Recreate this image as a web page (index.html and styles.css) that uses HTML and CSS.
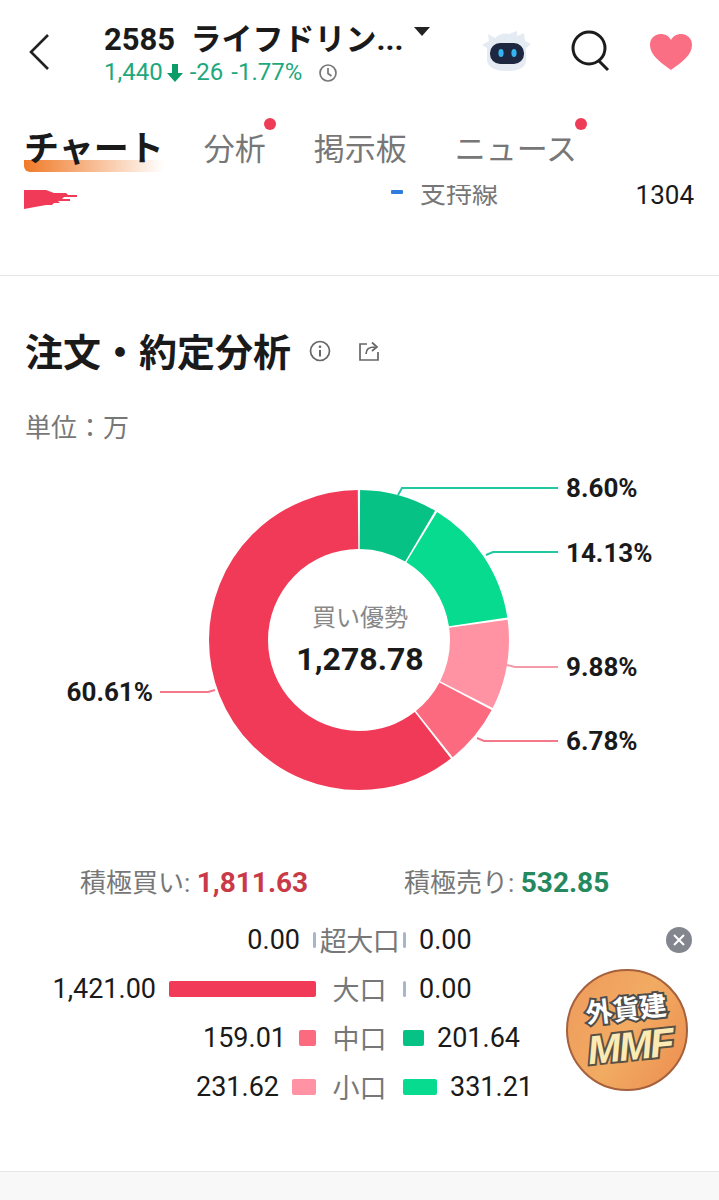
FILE: index.html
```html
<!DOCTYPE html>
<html lang="ja">
<head>
    <meta charset="UTF-8">
    <meta name="viewport" content="width=device-width, initial-scale=1.0">
    <title>注文・約定分析</title>
    <link rel="stylesheet" href="styles.css">
</head>
<body>
    <header class="top-bar">
        <svg class="back-icon" width="24" height="38" viewBox="0 0 24 38">
            <path d="M21 2 L4 19 L21 36" fill="none" stroke="#222" stroke-width="2.6"/>
        </svg>
        <div class="stock">
            <div class="stock-name">
                <span>2585&nbsp; ライフドリン...</span>
                <i class="caret"></i>
            </div>
            <div class="stock-price">
                <span>1,440</span>
                <svg width="16" height="20" viewBox="0 0 16 20">
                    <path d="M5 1 H11 V10 H16 L8 19 L0 10 H5 Z" fill="#0b9c68"/>
                </svg>
                <span class="change">-26</span>
                <span class="change">-1.77%</span>
                <svg class="clock" width="20" height="20" viewBox="0 0 20 20">
                    <circle cx="10" cy="10" r="8" fill="none" stroke="#777" stroke-width="1.7"/>
                    <path d="M10 5 V10.5 L13.5 13" fill="none" stroke="#777" stroke-width="1.7"/>
                </svg>
            </div>
        </div>
        <div class="top-actions">
            <svg width="52" height="46" viewBox="0 0 52 46">
                <path d="M8 14 L7 7 L14 11 Q20 5 28 7 L36 4 L36 9 L43 6 L44 14 L50 17 L45 21 L45 34 Q44 44 26 44 Q8 44 6 34 L6 21 L1 18 Z" fill="#e4ebf3"/>
                <rect x="9" y="16" width="34" height="21" rx="10" fill="#1d2740"/>
                <ellipse cx="20" cy="26" rx="2.6" ry="4" fill="#35b4ee"/>
                <ellipse cx="33" cy="26" rx="2.6" ry="4" fill="#35b4ee"/>
            </svg>
            <svg class="search-icon" width="40" height="42" viewBox="0 0 40 42">
                <circle cx="18" cy="18" r="16" fill="none" stroke="#1c1c1c" stroke-width="3"/>
                <path d="M28 31 L37 40" stroke="#1c1c1c" stroke-width="3"/>
            </svg>
            <svg class="heart-icon" width="42" height="36" viewBox="0 0 42 36">
                <path d="M21 36 C10 28 0 21 0 11 C0 4 5 0 11 0 C15 0 19 2 21 6 C23 2 27 0 31 0 C37 0 42 4 42 11 C42 21 32 28 21 36 Z" fill="#fb6f85"/>
            </svg>
        </div>
    </header>

    <nav class="tabs">
        <span class="tab active">チャート</span>
        <span class="tab dotted">分析</span>
        <span class="tab">掲示板</span>
        <span class="tab dotted">ニュース</span>
    </nav>

    <div class="chart-peek">
        <svg class="streak" width="54" height="22" viewBox="0 0 54 22">
            <path d="M0 1 H22 L30 4 H42 L44 6 H53 V8 H40 L38 10 H46 V12 H34 L36 14 H30 L28 16 H22 L0 20 Z" fill="#f13a57"/>
        </svg>
        <i class="line-key"></i>
        <span class="peek-label">支持線</span>
        <span class="peek-value">1304</span>
    </div>

    <section class="analysis">
        <div class="analysis-head">
            <h2>注文・約定分析</h2>
            <svg class="info-icon" width="22" height="22" viewBox="0 0 22 22">
                <circle cx="11" cy="11" r="9.5" fill="none" stroke="#666" stroke-width="1.7"/>
                <circle cx="11" cy="6.8" r="1.3" fill="#666"/>
                <path d="M11 10 V16.5" stroke="#666" stroke-width="2"/>
            </svg>
            <svg class="share-icon" width="22" height="22" viewBox="0 0 22 22">
                <path d="M9 4 H2 V20 H20 V12" fill="none" stroke="#666" stroke-width="1.7"/>
                <path d="M8 14 C8 9 11 7 17 7 M14 2.5 L19 7 L14 11" fill="none" stroke="#666" stroke-width="1.7"/>
            </svg>
        </div>
        <p class="unit">単位：万</p>

        <svg class="donut" width="719" height="340" viewBox="0 470 719 340">
            <g fill="none" stroke-width="59" transform="rotate(-90 359 645)">
                <circle cx="359" cy="645" r="120.5" pathLength="100" stroke="#07c285" stroke-dasharray="8.35 91.65" stroke-dashoffset="-0.12"/>
                <circle cx="359" cy="645" r="120.5" pathLength="100" stroke="#06db90" stroke-dasharray="13.88 86.12" stroke-dashoffset="-8.72"/>
                <circle cx="359" cy="645" r="120.5" pathLength="100" stroke="#ff92a3" stroke-dasharray="9.63 90.37" stroke-dashoffset="-22.85"/>
                <circle cx="359" cy="645" r="120.5" pathLength="100" stroke="#fc6a80" stroke-dasharray="6.53 93.47" stroke-dashoffset="-32.73"/>
                <circle cx="359" cy="645" r="120.5" pathLength="100" stroke="#f13a57" stroke-dasharray="60.36 39.64" stroke-dashoffset="-39.51"/>
            </g>
            <g fill="none" stroke-width="2">
                <path d="M398 500 L402 493 H558" stroke="#22c9a0"/>
                <path d="M486 560 L493 557 H558" stroke="#22c9a0"/>
                <path d="M507 670 L515 672 H558" stroke="#f59aa8"/>
                <path d="M477 743 L484 746 H558" stroke="#f4788a"/>
                <path d="M215 695 L208 697 H160" stroke="#f4788a"/>
            </g>
            <text class="pct" x="566" y="502">8.60%</text>
            <text class="pct" x="566" y="567">14.13%</text>
            <text class="pct" x="566" y="681">9.88%</text>
            <text class="pct" x="566" y="755">6.78%</text>
            <text class="pct" x="153" y="706" text-anchor="end">60.61%</text>
            <text class="donut-label" x="360" y="631" text-anchor="middle">買い優勢</text>
            <text class="donut-value" x="360" y="675" text-anchor="middle">1,278.78</text>
        </svg>

        <div class="totals">
            <div class="total buy">積極買い: <b>1,811.63</b></div>
            <div class="total sell">積極売り: <b>532.85</b></div>
        </div>

        <div class="orders">
            <div class="order-row">
                <div class="side left"><span>0.00</span><i class="bar empty"></i></div>
                <div class="size wide">超大口</div>
                <div class="side"><i class="bar empty"></i><span>0.00</span></div>
            </div>
            <div class="order-row">
                <div class="side left"><span>1,421.00</span><i class="bar red" style="width: 147px"></i></div>
                <div class="size">大口</div>
                <div class="side"><i class="bar empty"></i><span>0.00</span></div>
            </div>
            <div class="order-row">
                <div class="side left"><span>159.01</span><i class="bar mid-pink" style="width: 17px"></i></div>
                <div class="size">中口</div>
                <div class="side"><i class="bar dark-green" style="width: 21px"></i><span>201.64</span></div>
            </div>
            <div class="order-row">
                <div class="side left"><span>231.62</span><i class="bar pink" style="width: 24px"></i></div>
                <div class="size">小口</div>
                <div class="side"><i class="bar green" style="width: 34px"></i><span>331.21</span></div>
            </div>
        </div>
    </section>

    <div class="next-section"></div>

    <div class="promo">
        <div class="promo-text">
            <span class="promo-top">外貨建</span>
            <span class="promo-main">MMF</span>
        </div>
    </div>
    <div class="promo-close">
        <svg width="14" height="14" viewBox="0 0 14 14">
            <path d="M2 2 L12 12 M12 2 L2 12" stroke="#fff" stroke-width="2"/>
        </svg>
    </div>
</body>
</html>
```

FILE: styles.css
```css
:root {
    --sans: Roboto, "Noto Sans CJK JP", sans-serif;
    --text: #1a1a1a;
    --muted: #777777;
    --down: #1ea87c;
}

* {
    box-sizing: border-box;
}

body {
    margin: 0;
    height: 1200px;
    overflow: hidden;
    position: relative;
    background: #fff;
    color: var(--text);
    font-family: var(--sans);
}

.top-bar {
    height: 108px;
    display: flex;
    padding: 16px 27px 0 27px;
}

.back-icon {
    margin-top: 17px;
}

.stock {
    margin-left: 53px;
}

.stock-name {
    display: flex;
    align-items: center;
    height: 40px;
    font-size: 31px;
    font-weight: 700;
    white-space: nowrap;
}

.caret {
    width: 0;
    height: 0;
    margin: -10px 0 0 10px;
    border-left: 8px solid transparent;
    border-right: 8px solid transparent;
    border-top: 9px solid #222;
}

.stock-price {
    display: flex;
    align-items: center;
    height: 32px;
    font-size: 24px;
    color: var(--down);
    white-space: nowrap;
}

.stock-price svg {
    margin: 2px 7px 0 4px;
}

.change {
    margin-right: 8px;
}

.stock-price .clock {
    margin: 2px 0 0 8px;
}

.top-actions {
    display: flex;
    align-items: flex-start;
    margin-left: auto;
}

.top-actions svg {
    margin-top: 11px;
}

.top-actions .search-icon {
    margin: 14px 0 0 38px;
}

.top-actions .heart-icon {
    margin: 18px 0 0 39px;
}

.tabs {
    height: 77px;
    display: flex;
    align-items: flex-start;
    padding-left: 25px;
    font-size: 31px;
    color: var(--muted);
}

.tab {
    position: relative;
    height: 64px;
    line-height: 84px;
    margin-right: 48px;
    white-space: nowrap;
}

.tab:nth-child(1) {
    margin-right: 40px;
}

.tab.active {
    font-size: 35px;
    font-weight: 700;
    color: var(--text);
    background: linear-gradient(90deg, #f07a28, rgba(240, 122, 40, 0)) left bottom / 100% 12px no-repeat;
    border-radius: 6px;
    margin-left: -1px;
}

.tab.dotted::after {
    content: "";
    position: absolute;
    right: -10px;
    top: 10px;
    width: 12px;
    height: 12px;
    border-radius: 50%;
    background: #ee3c56;
}

.chart-peek {
    height: 91px;
    display: flex;
    align-items: flex-start;
    overflow: hidden;
    padding: 0 25px;
    border-bottom: 1px solid #e6e6e6;
}

.streak {
    margin-left: -1px;
    margin-top: 4px;
}

.line-key {
    width: 12px;
    height: 4px;
    margin: 5px 0 0 313px;
    border-radius: 1px;
    background: #2f7be0;
}

.peek-label {
    margin: -8px 0 0 17px;
    font-size: 26px;
    line-height: 34px;
    color: #777;
}

.peek-value {
    margin: -7px 0 0 auto;
    font-size: 26px;
    line-height: 34px;
}

.analysis-head {
    display: flex;
    align-items: center;
    height: 44px;
    margin-top: 55px;
    padding-left: 25px;
}

h2 {
    margin: 0;
    font-size: 38px;
    line-height: 44px;
    font-weight: 700;
    white-space: nowrap;
}

.info-icon {
    margin: -4px 0 0 18px;
}

.share-icon {
    margin: -4px 0 0 27px;
}

.unit {
    margin: 36px 0 0 25px;
    height: 34px;
    font-size: 26px;
    line-height: 34px;
    color: var(--muted);
}

.donut {
    display: block;
    margin-top: 20px;
}

.pct {
    font-size: 26px;
    font-weight: 700;
    fill: var(--text);
}

.donut-label {
    font-size: 24px;
    fill: #888;
}

.donut-value {
    font-size: 32px;
    font-weight: 700;
    fill: var(--text);
}

.totals {
    display: flex;
    height: 40px;
    margin-top: 55px;
    padding-left: 80px;
    align-items: center;
    font-size: 26px;
    color: var(--muted);
    white-space: nowrap;
}

.total b {
    font-size: 28px;
}

.total.buy {
    width: 324px;
}

.total.buy b {
    color: #c93a48;
}

.total.sell b {
    color: #25895f;
}

.orders {
    margin-top: 15px;
}

.order-row {
    display: grid;
    grid-template-columns: 316px 87px 1fr;
    align-items: center;
    height: 49px;
    font-size: 27px;
    white-space: nowrap;
}

.side {
    display: flex;
    align-items: center;
    gap: 13px;
}

.side.left {
    justify-content: flex-end;
}

.size {
    text-align: center;
    color: var(--muted);
}

.size.wide {
    letter-spacing: -0.5px;
}

.bar {
    display: block;
    height: 16px;
    border-radius: 2px;
}

.bar.empty {
    width: 3px;
    background: #a9b5c9;
}

.bar.red {
    background: #f13a57;
}

.bar.mid-pink {
    background: #fc6a80;
}

.bar.pink {
    background: #ff92a3;
}

.bar.dark-green {
    background: #07c285;
}

.bar.green {
    background: #06db90;
}

.next-section {
    position: absolute;
    left: 0;
    right: 0;
    top: 1171px;
    bottom: 0;
    background: #f8f8f8;
    border-top: 1px solid #e6e6e6;
}

.promo {
    position: absolute;
    left: 566px;
    top: 969px;
    width: 122px;
    height: 122px;
    border-radius: 50%;
    border: 2px solid #a5603c;
    background: linear-gradient(120deg, #ee9a5c, #f2ab62 50%, #ec8d50);
    box-shadow: 48px 0 0 -50px #f5d98f;
}

.promo-text {
    display: flex;
    flex-direction: column;
    align-items: center;
    transform: rotate(-6deg);
    padding-top: 23px;
    font-weight: 700;
}

.promo-top {
    font-size: 27px;
    line-height: 32px;
    color: #fff;
    -webkit-text-stroke: 4px #4d4d4d;
    paint-order: stroke fill;
}

.promo-main {
    font-family: "Liberation Sans", sans-serif;
    font-size: 40px;
    line-height: 40px;
    font-style: italic;
    letter-spacing: -2px;
    color: #fbeab4;
    -webkit-text-stroke: 4px #5a5145;
    paint-order: stroke fill;
}

.promo-close {
    position: absolute;
    left: 666px;
    top: 927px;
    width: 26px;
    height: 26px;
    border-radius: 50%;
    background: #83868f;
    display: flex;
    align-items: center;
    justify-content: center;
}
```
